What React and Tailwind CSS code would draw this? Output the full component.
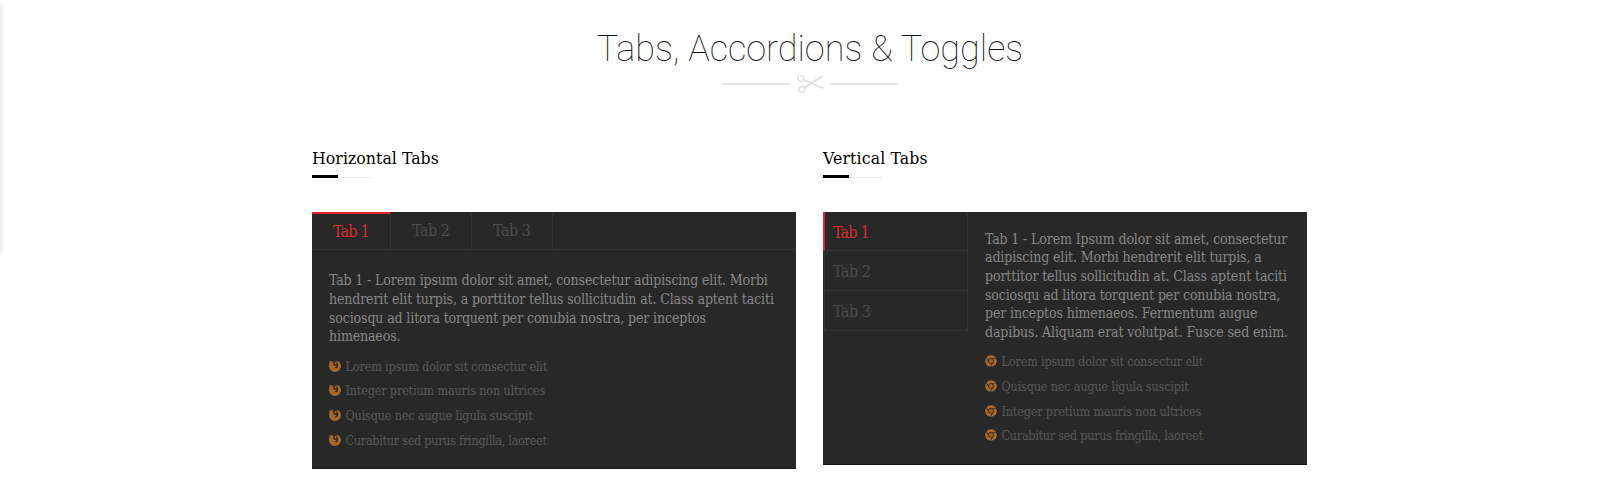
import React from 'react';
import { FaChrome } from 'react-icons/fa';

const SERIF = "font-['Roboto_Slab','DejaVu_Serif_Condensed','DejaVu_Serif',serif]";

function Scissors() {
  return (
    <svg width="28" height="20" viewBox="0 0 28 20" fill="none" stroke="#dfdfdf" strokeLinecap="round">
      <path d="M4.2 1.6 C6.4 1.2 8 2.8 7.8 4.8 C7.6 6.8 5.8 7.9 4 7.3 C2.2 6.7 1.6 4.6 2.4 3 L2.2 1" strokeWidth="1.3" />
      <circle cx="6" cy="15.5" r="3" strokeWidth="1.4" />
      <path d="M8 6.2 L27 14" strokeWidth="1.6" />
      <path d="M8.4 13.6 L26 2.4" strokeWidth="2" />
    </svg>
  );
}

function Firefox({ className }) {
  return (
    <svg className={className} viewBox="0 0 24 24" fill="currentColor">
      <path d="M1.5 1 L4 3.5 Q6 2 8.5 2.2 Q7 3.6 7 5.5 L9.5 6.5 Q10 8 8 9 L8.5 11 Q10 10.3 12 11.5 Q14 12.5 15.5 11.5 Q14.5 15.5 10 15 Q13 18 16.5 15.5 Q20 12 17.5 8 Q16.5 6.5 17 5 Q15.5 3 14 2.5 Q18 0.5 21 4.5 Q24 8 24 12.5 A12 11.5 0 0 1 0 12.5 Q0 9 1.2 7 Q0.6 4 1.5 1 Z" />
      <path d="M11 3 Q15 3.5 15.5 7.5 L12.5 9.5 Q11 8 11.8 6 Z" />
    </svg>
  );
}

function Heading({ children, spacing, gap, rule }) {
  return (
    <header className="h-[72px]">
      <h3 className={`h-[35px] pt-[6px] text-[17.5px] leading-[24px] text-black ${spacing}`}>{children}</h3>
      <div className={`flex items-end ${gap}`}>
        <span className="h-[3px] w-[26px] bg-black" />
        <span className={`h-px bg-[#e9e9e9] ${rule}`} />
      </div>
    </header>
  );
}

function Lines({ lines }) {
  return (
    <p className="whitespace-nowrap text-[14px] leading-[18.67px] tracking-[-0.13px] text-[#878787]">
      {lines.map((line) => (
        <span key={line} className="block">{line}</span>
      ))}
    </p>
  );
}

function List({ items, icon: Icon, iconOffset }) {
  return (
    <ul className="mt-[8.6px] whitespace-nowrap text-[12.5px] leading-[24.67px] tracking-[-0.16px] text-[#585858] [&>li:last-child]:tracking-[-0.27px]">
      {items.map((item) => (
        <li key={item} className="flex h-[24.67px]">
          <Icon className={`mr-[4.5px] size-[12px] shrink-0 text-[#a8672b] ${iconOffset}`} />
          {item}
        </li>
      ))}
    </ul>
  );
}

export default function App() {
  return (
    <main className={`relative h-[502px] w-[1615px] overflow-hidden bg-white ${SERIF}`}>
      <div className="absolute top-[4px] -left-[10px] h-[250px] w-[10px] shadow-[0_0_6px_rgba(0,0,0,0.16)]" />

      <header className="flex h-[140px] w-[1620px] flex-col items-center pt-[25px]">
        <h1 className="h-[48px] font-['Roboto_Slab',Roboto,sans-serif] text-[36px] leading-[49px] font-thin whitespace-nowrap text-[#111]">
          Tabs, Accordions &amp; Toggles
        </h1>
        <div className="mt-[1px] flex items-center gap-[6px]">
          <span className="h-[2px] w-[68px] bg-[#e4e4e4]" />
          <Scissors />
          <span className="h-[2px] w-[68px] bg-[#e4e4e4]" />
        </div>
      </header>

      <div className="ml-[312px] flex gap-[27px]">
        <section className="w-[484px]">
          <Heading spacing="tracking-[0.05px]" gap="gap-[2px]" rule="w-[32px]">Horizontal Tabs</Heading>
          <div className="h-[257px] border-b border-[#1c1c1c] bg-[#282828]">
            <nav className="flex h-[38px] border-b border-[#343434] text-[16px] leading-[38px] text-[#4b4b4b]">
              <span className="w-[79px] border-t-2 border-r border-t-[#e62329] border-r-[#343434] pl-[21px] leading-[35px] tracking-[-0.8px] text-[#d92b30]">Tab 1</span>
              <span className="w-[81px] border-r border-[#343434] pl-[21px] tracking-[-0.5px]">Tab 2</span>
              <span className="w-[81px] border-r border-[#343434] pl-[21px] tracking-[-0.5px]">Tab 3</span>
            </nav>
            <div className="pt-[21.3px] pl-[17px]">
              <Lines
                lines={[
                  'Tab 1 - Lorem ipsum dolor sit amet, consectetur adipiscing elit. Morbi',
                  'hendrerit elit turpis, a porttitor tellus sollicitudin at. Class aptent taciti',
                  'sociosqu ad litora torquent per conubia nostra, per inceptos',
                  'himenaeos.',
                ]}
              />
              <List
                icon={Firefox}
                iconOffset="mt-[5px]"
                items={[
                  'Lorem ipsum dolor sit consectur elit',
                  'Integer pretium mauris non ultrices',
                  'Quisque nec augue ligula suscipit',
                  'Curabitur sed purus fringilla, laoreet',
                ]}
              />
            </div>
          </div>
        </section>

        <section className="w-[484px]">
          <Heading spacing="tracking-[0.15px]" gap="gap-0" rule="w-[33px]">Vertical Tabs</Heading>
          <div className="flex h-[253px] border-b border-[#161616] bg-[#282828]">
            <nav className="flex h-[119px] w-[145px] flex-col border-r border-[#343434] text-[16px] text-[#4b4b4b]">
              <span className="h-[39px] border-b border-l-2 border-b-[#343434] border-l-[#e62329] pl-[8px] leading-[41px] tracking-[-0.8px] text-[#d92b30]">Tab 1</span>
              <span className="ml-px h-[40px] border-b border-l border-[#343434] pl-[8px] leading-[41px] tracking-[-0.5px]">Tab 2</span>
              <span className="ml-px h-[40px] border-b border-l border-[#343434] pl-[8px] leading-[41px] tracking-[-0.5px]">Tab 3</span>
            </nav>
            <div className="pt-[17.6px] pl-[17px]">
              <Lines
                lines={[
                  'Tab 1 - Lorem Ipsum dolor sit amet, consectetur',
                  'adipiscing elit. Morbi hendrerit elit turpis, a',
                  'porttitor tellus sollicitudin at. Class aptent taciti',
                  'sociosqu ad litora torquent per conubia nostra,',
                  'per inceptos himenaeos. Fermentum augue',
                  'dapibus. Aliquam erat volutpat. Fusce sed enim.',
                ]}
              />
              <List
                icon={FaChrome}
                iconOffset="mt-[5px]"
                items={[
                  'Lorem ipsum dolor sit consectur elit',
                  'Quisque nec augue ligula suscipit',
                  'Integer pretium mauris non ultrices',
                  'Curabitur sed purus fringilla, laoreet',
                ]}
              />
            </div>
          </div>
        </section>
      </div>
    </main>
  );
}
